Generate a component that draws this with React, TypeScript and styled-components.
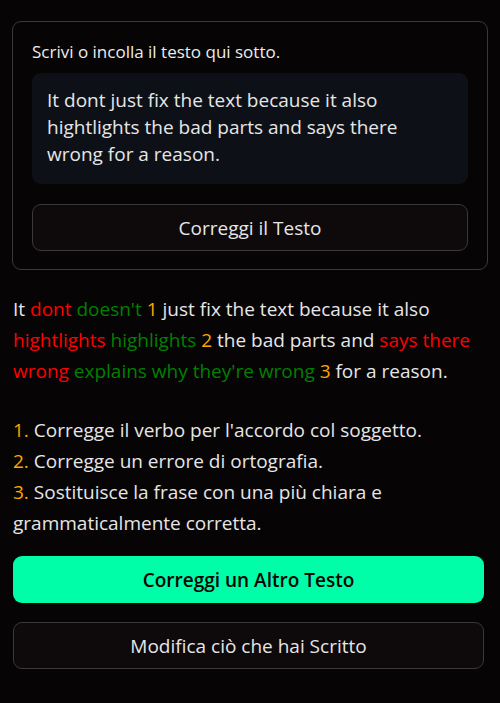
import styled, { createGlobalStyle } from "styled-components";

const GlobalStyle = createGlobalStyle`
  html, body {
    margin: 0;
    padding: 0;
    background: #060405;
    font-family: "Open Sans", "Noto Sans", sans-serif;
    color: #e6e6e6;
  }
`

const Page = styled.div`
  display: flex;
  flex-direction: column;
  padding: 21px 12px 0 12px;
  min-height: 703px;
  box-sizing: border-box;
`

const Card = styled.div`
  display: flex;
  flex-direction: column;
  padding: 19px 19px 18px 19px;
  border: 1px solid #3a3838;
  border-radius: 9px;
`

const Label = styled.div`
  font-size: 17px;
  line-height: 22px;
  color: #ececec;
  margin-bottom: 10px;
`

const InputBox = styled.div`
  background: #0d1117;
  border-radius: 9px;
  padding: 14px 15px 16px 15px;
  font-size: 19px;
  line-height: 27px;
  color: #e6e6e6;
`

const Button = styled.div<{ $primary?: boolean }>`
  display: flex;
  align-items: center;
  justify-content: center;
  height: 47px;
  box-sizing: border-box;
  border-radius: 9px;
  font-size: 19px;
  font-weight: ${p => (p.$primary ? 600 : 400)};
  background: ${p => (p.$primary ? "#00fda8" : "#0e090a")};
  color: ${p => (p.$primary ? "#050505" : "#e6e6e6")};
  border: ${p => (p.$primary ? "none" : "1px solid #3a3838")};
`

const CardButton = styled(Button)`
  margin-top: 20px;
`

const Result = styled.div`
  margin: 24px 0 0 1px;
  font-size: 19px;
  line-height: 31px;
  color: #e6e6e6;
`

const Notes = styled.div`
  margin: 28px 0 0 1px;
  font-size: 19px;
  line-height: 31px;
  color: #e6e6e6;
`

const Mark = styled.span<{ $kind: "bad" | "good" | "num" }>`
  color: ${p => (p.$kind === "bad" ? "#ff0000" : p.$kind === "good" ? "#008000" : "#ffa500")};
`

const Actions = styled.div`
  display: flex;
  flex-direction: column;
  gap: 19px;
  margin: 17px 4px 0 1px;
`

export default function App() {
  return (
    <>
      <GlobalStyle />
      <Page>
        <Card>
          <Label>Scrivi o incolla il testo qui sotto.</Label>
          <InputBox>
            It dont just fix the text because it also hightlights the bad parts and says there wrong for a reason.
          </InputBox>
          <CardButton>Correggi il Testo</CardButton>
        </Card>

        <Result>
          It <Mark $kind="bad">dont</Mark> <Mark $kind="good">doesn't</Mark> <Mark $kind="num">1</Mark> just fix the text because it also{" "}
          <Mark $kind="bad">hightlights</Mark> <Mark $kind="good">highlights</Mark> <Mark $kind="num">2</Mark> the bad parts and{" "}
          <Mark $kind="bad">says there wrong</Mark> <Mark $kind="good">explains why they're wrong</Mark> <Mark $kind="num">3</Mark> for a reason.
        </Result>

        <Notes>
          <div><Mark $kind="num">1.</Mark> Corregge il verbo per l'accordo col soggetto.</div>
          <div><Mark $kind="num">2.</Mark> Corregge un errore di ortografia.</div>
          <div><Mark $kind="num">3.</Mark> Sostituisce la frase con una più chiara e grammaticalmente corretta.</div>
        </Notes>

        <Actions>
          <Button $primary>Correggi un Altro Testo</Button>
          <Button>Modifica ciò che hai Scritto</Button>
        </Actions>
      </Page>
    </>
  )
}
